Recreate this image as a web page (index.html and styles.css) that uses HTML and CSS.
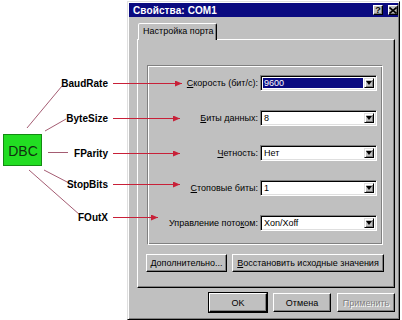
FILE: index.html
```html
<!DOCTYPE html>
<html lang="ru">
<head>
<meta charset="utf-8">
<title>Свойства: COM1</title>
<link rel="stylesheet" href="styles.css">
</head>
<body>
<div class="stage">
  <div class="dialog">
    <div class="titlebar">
      <span class="title">Свойства: COM1</span>
      <div class="tbtns">
        <span class="tbtn">?</span>
        <span class="tbtn close">
          <svg width="8" height="7" viewBox="0 0 8 7"><path d="M0.5 0.5 L7.5 6.5 M7.5 0.5 L0.5 6.5" stroke="#000" stroke-width="1.6"/></svg>
        </span>
      </div>
    </div>
    <div class="tabs"><div class="tab">Настройка порта</div></div>
    <div class="panel">
      <div class="group">
        <div class="row"><span class="lbl"><u>С</u>корость (бит/с):</span><div class="combo"><span class="val sel">9600</span><span class="drop"><i class="tri"></i></span></div></div>
        <div class="row"><span class="lbl"><u>Б</u>иты данных:</span><div class="combo"><span class="val">8</span><span class="drop"><i class="tri"></i></span></div></div>
        <div class="row"><span class="lbl"><u>Ч</u>етность:</span><div class="combo"><span class="val">Нет</span><span class="drop"><i class="tri"></i></span></div></div>
        <div class="row"><span class="lbl"><u>С</u>топовые биты:</span><div class="combo"><span class="val">1</span><span class="drop"><i class="tri"></i></span></div></div>
        <div class="row"><span class="lbl">Управление пото<u>к</u>ом:</span><div class="combo"><span class="val">Xon/Xoff</span><span class="drop"><i class="tri"></i></span></div></div>
      </div>
      <div class="panel-btns">
        <span class="btn btn-adv"><u>Д</u>ополнительно...</span>
        <span class="btn btn-rst"><u>В</u>осстановить исходные значения</span>
      </div>
    </div>
    <div class="footer">
      <span class="btn btn-foot default">OK</span>
      <span class="btn btn-foot">Отмена</span>
      <span class="btn btn-foot disabled">Применить</span>
    </div>
  </div>

  <svg class="diagram" width="402" height="320" viewBox="0 0 402 320">
    <defs>
      <marker id="ah" markerWidth="7" markerHeight="6" refX="7" refY="3" orient="auto" markerUnits="userSpaceOnUse">
        <path d="M0 0 L7 3 L0 6 Z" fill="#c82038"/>
      </marker>
    </defs>
    <rect x="3.5" y="134.5" width="38" height="31" fill="#22dd22" stroke="#138a13"/>
    <text x="23" y="156" class="dbc" text-anchor="middle">DBC</text>

    <g stroke="#9a4a62" stroke-width="0.9" fill="none">
      <line x1="27" y1="128" x2="62" y2="86"/>
      <line x1="45" y1="131" x2="66" y2="119"/>
      <line x1="48" y1="152.5" x2="68" y2="152.5"/>
      <line x1="44" y1="170" x2="69" y2="183"/>
      <line x1="29" y1="170" x2="80" y2="215"/>
    </g>

    <g class="names" text-anchor="end">
      <text x="108" y="87">BaudRate</text>
      <text x="108" y="122">ByteSize</text>
      <text x="108" y="157">FParity</text>
      <text x="108" y="188">StopBits</text>
      <text x="108" y="221">FOutX</text>
    </g>

    <g stroke="#c82038" stroke-width="1.1" fill="none">
      <line x1="113" y1="83.5" x2="182" y2="83.5" marker-end="url(#ah)"/>
      <line x1="113" y1="118.5" x2="180" y2="118.5" marker-end="url(#ah)"/>
      <line x1="113" y1="153.5" x2="180" y2="153.5" marker-end="url(#ah)"/>
      <line x1="113" y1="184.5" x2="180" y2="184.5" marker-end="url(#ah)"/>
      <line x1="113" y1="217.5" x2="158" y2="217.5" marker-end="url(#ah)"/>
    </g>
  </svg>
</div>
</body>
</html>
```

FILE: styles.css
```css
* { box-sizing: border-box; }
html, body { margin: 0; padding: 0; background: #fff; }
body { font-family: "Liberation Sans", Arial, sans-serif; font-size: 9px; color: #000; }

.stage { position: relative; width: 402px; height: 320px; overflow: hidden; }

.dialog {
  margin: 1px 0 0 127px;
  width: 273px;
  height: 319px;
  background: #c0c0c0;
  border: 1px solid;
  border-color: #dfdfdf #000 #000 #dfdfdf;
  box-shadow: inset 1px 1px #fff, inset -1px -1px #808080;
  padding: 1px;
  display: flex;
  flex-direction: column;
}

.titlebar {
  height: 14px;
  background: #0a0a80;
  display: flex;
  align-items: center;
  justify-content: space-between;
  padding: 0 0 0 4px;
}
.title { color: #fff; font-weight: bold; font-size: 10px; letter-spacing: 0.1px; }
.tbtns { display: flex; gap: 5px; }
.tbtn {
  width: 10px; height: 10px;
  background: #c0c0c0;
  border: 1px solid; border-color: #fff #000 #000 #fff;
  box-shadow: inset -1px -1px #808080;
  display: flex; align-items: center; justify-content: center;
  font-size: 9px; font-weight: bold; line-height: 1;
}

.tabs { margin-top: 6px; padding-left: 9px; display: flex; height: 16px; }
.tab {
  height: 17px;
  padding: 2px 5px 0 4px;
  width: 79px;
  border: 1px solid; border-bottom: none;
  border-color: #fff #000 transparent #fff;
  box-shadow: inset -1px 0 #808080;
  border-radius: 2px 2px 0 0;
  background: #c0c0c0;
  position: relative; z-index: 1;
  white-space: nowrap;
  font-size: 9px;
}

.panel {
  margin-left: 8px;
  width: 258px;
  height: 249px;
  border: 1px solid; border-color: #fff #000 #000 #fff;
  box-shadow: inset -1px -1px #808080;
  padding: 25px 0 0 9px;
  display: flex; flex-direction: column;
}

.group {
  width: 236px;
  height: 180px;
  border: 1px solid; border-color: #808080 #fff #fff #808080;
  box-shadow: inset 1px 1px #fff, inset -1px -1px #808080;
  padding: 9px 5px 0 0;
  display: flex; flex-direction: column; gap: 19px;
}
.row { display: flex; justify-content: flex-end; align-items: center; height: 16px; }
.lbl { margin-right: 2px; white-space: nowrap; }
.combo {
  width: 117px; height: 16px;
  background: #fff;
  border: 1px solid; border-color: #808080 #fff #fff #808080;
  box-shadow: inset 1px 1px #000, inset -1px -1px #dfdfdf;
  display: flex; align-items: stretch;
  padding: 2px;
}
.val { flex: 1; padding-left: 1px; line-height: 10px; margin-right: 1px; }
.val.sel { background: #0a0a80; color: #fff; }
.drop {
  width: 10px;
  background: #c0c0c0;
  border: 1px solid; border-color: #dfdfdf #000 #000 #dfdfdf;
  box-shadow: inset 1px 1px #fff, inset -1px -1px #808080;
  display: flex; align-items: center; justify-content: center;
}
.tri { width: 0; height: 0; border-left: 3.5px solid transparent; border-right: 3.5px solid transparent; border-top: 4px solid #000; }

.btn {
  height: 18px;
  background: #c0c0c0;
  border: 1px solid; border-color: #fff #000 #000 #fff;
  box-shadow: inset -1px -1px #808080;
  display: flex; align-items: center; justify-content: center;
  white-space: nowrap;
  font-size: 9px;
}
.panel-btns { display: flex; gap: 5px; margin-top: 9px; margin-left: -1px; }
.btn-adv { width: 81px; }
.btn-rst { width: 152px; }

.footer { display: flex; justify-content: flex-end; gap: 6px; margin-top: 5px; padding-right: 3px; }
.btn-foot { width: 58px; height: 19px; }
.btn-foot.default { outline: 1px solid #000; outline-offset: 0; border-color: #fff #000 #000 #fff; }
.btn-foot.disabled { color: #808080; text-shadow: 1px 1px #fff; }

.diagram { position: absolute; left: 0; top: 0; pointer-events: none; }
.names text { font-family: "Liberation Sans", Arial, sans-serif; font-weight: bold; font-size: 10px; fill: #000; }
.dbc { font-family: "Liberation Sans", Arial, sans-serif; font-size: 14px; fill: #0f300f; }
```
